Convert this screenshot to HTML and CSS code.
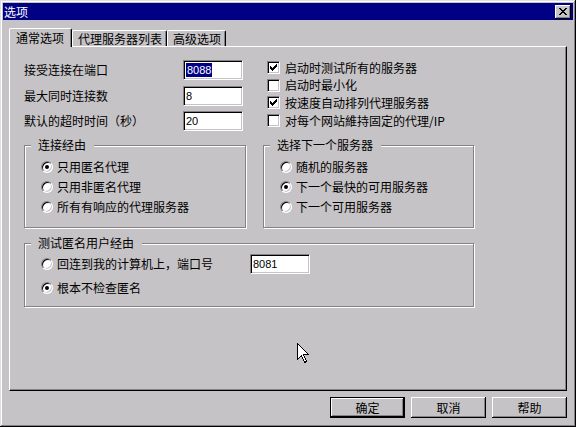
FILE: index.html
```html
<!DOCTYPE html>
<html lang="zh-CN">
<head>
<meta charset="utf-8">
<title>选项</title>
<link rel="stylesheet" href="styles.css">
</head>
<body>
<div class="window">
  <div class="titlebar">
    <span class="title">选项</span>
    <button class="close" aria-label="关闭">
      <svg width="8" height="7" viewBox="0 0 8 7" shape-rendering="crispEdges">
        <rect x="0" y="0" width="2" height="1"/><rect x="6" y="0" width="2" height="1"/>
        <rect x="1" y="1" width="2" height="1"/><rect x="5" y="1" width="2" height="1"/>
        <rect x="2" y="2" width="4" height="1"/>
        <rect x="3" y="3" width="2" height="1"/>
        <rect x="2" y="4" width="4" height="1"/>
        <rect x="1" y="5" width="2" height="1"/><rect x="5" y="5" width="2" height="1"/>
        <rect x="0" y="6" width="2" height="1"/><rect x="6" y="6" width="2" height="1"/>
      </svg>
    </button>
  </div>
  <div class="body">
    <div class="tabs">
      <div class="tab active">通常选项</div>
      <div class="tab">代理服务器列表</div>
      <div class="tab">高级选项</div>
    </div>
    <div class="panel">
      <div class="top">
        <div class="fields">
          <div class="field"><span>接受连接在端口</span><span class="input"><span class="sel">8088</span></span></div>
          <div class="field"><span>最大同时连接数</span><span class="input">8</span></div>
          <div class="field"><span>默认的超时时间（秒）</span><span class="input">20</span></div>
        </div>
        <div class="checks">
          <div class="check"><span class="cb"><svg width="7" height="7" viewBox="0 0 7 7" shape-rendering="crispEdges"><polygon points="0,2 1,2 1,3 2,3 2,4 3,4 3,3 4,3 4,2 5,2 5,1 6,1 6,0 7,0 7,3 6,3 6,4 5,4 5,5 4,5 4,6 3,6 3,7 2,7 2,6 1,6 1,5 0,5"/></svg></span>启动时测试所有的服务器</div>
          <div class="check"><span class="cb"></span>启动时最小化</div>
          <div class="check"><span class="cb"><svg width="7" height="7" viewBox="0 0 7 7" shape-rendering="crispEdges"><polygon points="0,2 1,2 1,3 2,3 2,4 3,4 3,3 4,3 4,2 5,2 5,1 6,1 6,0 7,0 7,3 6,3 6,4 5,4 5,5 4,5 4,6 3,6 3,7 2,7 2,6 1,6 1,5 0,5"/></svg></span>按速度自动排列代理服务器</div>
          <div class="check"><span class="cb"></span>对每个网站維持固定的代理/IP</div>
        </div>
      </div>
      <div class="groups">
        <fieldset class="group g-left">
          <legend>连接经由</legend>
          <div class="options">
            <div class="opt"><span class="radio on"></span>只用匿名代理</div>
            <div class="opt"><span class="radio"></span>只用非匿名代理</div>
            <div class="opt"><span class="radio"></span>所有有响应的代理服务器</div>
          </div>
        </fieldset>
        <fieldset class="group g-right">
          <legend>选择下一个服务器</legend>
          <div class="options">
            <div class="opt"><span class="radio"></span>随机的服务器</div>
            <div class="opt"><span class="radio on"></span>下一个最快的可用服务器</div>
            <div class="opt"><span class="radio"></span>下一个可用服务器</div>
          </div>
        </fieldset>
      </div>
      <fieldset class="group g-wide">
        <legend>测试匿名用户经由</legend>
        <div class="options wide">
          <div class="opt"><span class="radio"></span><span class="optlabel">回连到我的计算机上，端口号</span><span class="input port">8081</span></div>
          <div class="opt"><span class="radio on"></span>根本不检查匿名</div>
        </div>
      </fieldset>
    </div>
    <div class="buttons">
      <button class="btn default">确定</button>
      <button class="btn">取消</button>
      <button class="btn">帮助</button>
    </div>
  </div>
  <svg class="cursor" width="12" height="20" viewBox="0 0 12 20" shape-rendering="crispEdges">
    <polygon points="0.5,0.5 0.5,16.5 4.5,12.5 7.5,19.5 9.5,18.5 6.5,11.5 11.5,11.5" fill="#fff" stroke="#000" stroke-width="1"/>
  </svg>
</div>
</body>
</html>
```
FILE: styles.css
```css
html, body {
  margin: 0;
  background: #c6c3c6;
}
body {
  font: 12px/14px "Noto Sans CJK SC", "Liberation Sans", sans-serif;
  color: #000;
}
.window {
  position: relative;
  width: 576px;
  height: 427px;
  box-sizing: border-box;
  padding: 3px;
  background: #c6c3c6;
  box-shadow: inset -1px -1px #000, inset 1px 1px #dfdfdf, inset -2px -2px #848284, inset 2px 2px #fff;
  display: flex;
  flex-direction: column;
}
.titlebar {
  height: 17px;
  background: #000084;
  color: #fff;
  display: flex;
  align-items: center;
  justify-content: space-between;
  padding: 0 2px 0 1px;
}
.title {
  line-height: 17px;
}
.close {
  width: 16px;
  height: 14px;
  padding: 0;
  border: 0;
  background: #c6c3c6;
  box-shadow: inset -1px -1px #000, inset 1px 1px #fff, inset -2px -2px #848284;
  display: flex;
  align-items: center;
  justify-content: center;
}
.close svg { display: block; margin-left: 0; }
.body {
  flex: 1;
  display: flex;
  flex-direction: column;
  padding: 8px 6px 0 6px;
}
.tabs {
  display: flex;
  align-items: flex-end;
  height: 19px;
  margin-bottom: -1px;
  position: relative;
  z-index: 1;
}
.tab {
  box-sizing: border-box;
  height: 16px;
  margin-bottom: 1px;
  padding: 0 4px 0 5px;
  line-height: 15px;
  border-top: 1px solid #fff;
  border-left: 1px solid #fff;
  border-right: 1px solid #000;
  border-radius: 2px 2px 0 0;
  box-shadow: inset -1px 0 #848284;
  background: #c6c3c6;
  white-space: nowrap;
}
.tab.active {
  height: 19px;
  margin-bottom: 0;
  padding: 0 7px 0 6px;
  line-height: 17px;
}
.panel {
  box-sizing: border-box;
  height: 345px;
  border-top: 1px solid #fff;
  border-left: 1px solid #fff;
  border-right: 1px solid #000;
  border-bottom: 1px solid #000;
  box-shadow: inset -1px -1px #848284;
  padding: 13px 0 0 14px;
}
.top {
  display: flex;
}
.fields {
  width: 219px;
  display: flex;
  flex-direction: column;
  gap: 5.5px;
}
.field {
  height: 20px;
  display: flex;
  align-items: center;
  justify-content: space-between;
}
.input {
  box-sizing: border-box;
  width: 60px;
  height: 20px;
  background: #fff;
  border-top: 1px solid #848284;
  border-left: 1px solid #848284;
  border-right: 1px solid #fff;
  border-bottom: 1px solid #fff;
  box-shadow: inset 1px 1px #000, inset -1px -1px #c6c3c6;
  padding: 2px 0 0 2px;
  font: 11px/14px "Liberation Sans", sans-serif;
}
.sel {
  background: #000084;
  color: #fff;
  padding: 0 1px;
  display: inline-block;
  line-height: 14px;
}
.checks {
  margin-left: 24px;
  padding-top: 1px;
  display: flex;
  flex-direction: column;
  gap: 4.7px;
}
.check {
  height: 13px;
  display: flex;
  align-items: center;
  white-space: nowrap;
}
.cb {
  box-sizing: border-box;
  width: 13px;
  height: 13px;
  flex: none;
  margin-right: 5px;
  background: #fff;
  border-top: 1px solid #848284;
  border-left: 1px solid #848284;
  border-right: 1px solid #fff;
  border-bottom: 1px solid #fff;
  box-shadow: inset 1px 1px #000, inset -1px -1px #c6c3c6;
  display: flex;
  align-items: center;
  justify-content: center;
}
.cb svg { display: block; }
.groups {
  display: flex;
  gap: 17px;
  margin-top: 7px;
}
.group {
  margin: 0;
  padding: 0;
  min-width: 0;
  box-sizing: border-box;
  border: 1px solid #848284;
  box-shadow: inset 1px 1px #fff, 1px 1px #fff;
}
.group legend {
  margin-left: 6px;
  padding: 0 8px 0 7px;
  line-height: 14px;
  background: #c6c3c6;
}
.g-left { width: 222px; }
.g-right { width: 211px; }
.g-wide { width: 450px; margin-top: 8px; }
.options {
  padding: 5px 0 10px 16px;
}
.options.wide {
  padding: 4px 0 8px 16px;
  display: flex;
  flex-direction: column;
  gap: 4px;
}
.opt {
  height: 20px;
  display: flex;
  align-items: center;
  white-space: nowrap;
}
.radio {
  box-sizing: border-box;
  width: 12px;
  height: 12px;
  flex: none;
  margin-right: 4px;
  border-radius: 50%;
  background: #fff;
  border-top: 1px solid #848284;
  border-left: 1px solid #848284;
  border-right: 1px solid #fff;
  border-bottom: 1px solid #fff;
  box-shadow: inset 1px 1px #000, inset -1px -1px #c6c3c6;
  display: flex;
  align-items: center;
  justify-content: center;
}
.radio.on::after {
  content: "";
  width: 4px;
  height: 4px;
  border-radius: 50%;
  background: #000;
}
.optlabel { width: 193px; }
.input.port { width: 60px; }
.buttons {
  display: flex;
  justify-content: flex-end;
  gap: 6px;
  margin-top: 6px;
}
.btn {
  box-sizing: border-box;
  width: 75px;
  height: 21px;
  padding: 0;
  border: 0;
  background: #c6c3c6;
  font: 12px/14px "Noto Sans CJK SC", sans-serif;
  color: #000;
  box-shadow: inset -1px -1px #000, inset 1px 1px #fff, inset -2px -2px #848284;
}
.btn.default {
  border: 1px solid #000;
  box-shadow: inset -1px -1px #000, inset 1px 1px #fff, inset -2px -2px #848284;
}
.cursor {
  position: absolute;
  left: 297px;
  top: 343px;
}
```
